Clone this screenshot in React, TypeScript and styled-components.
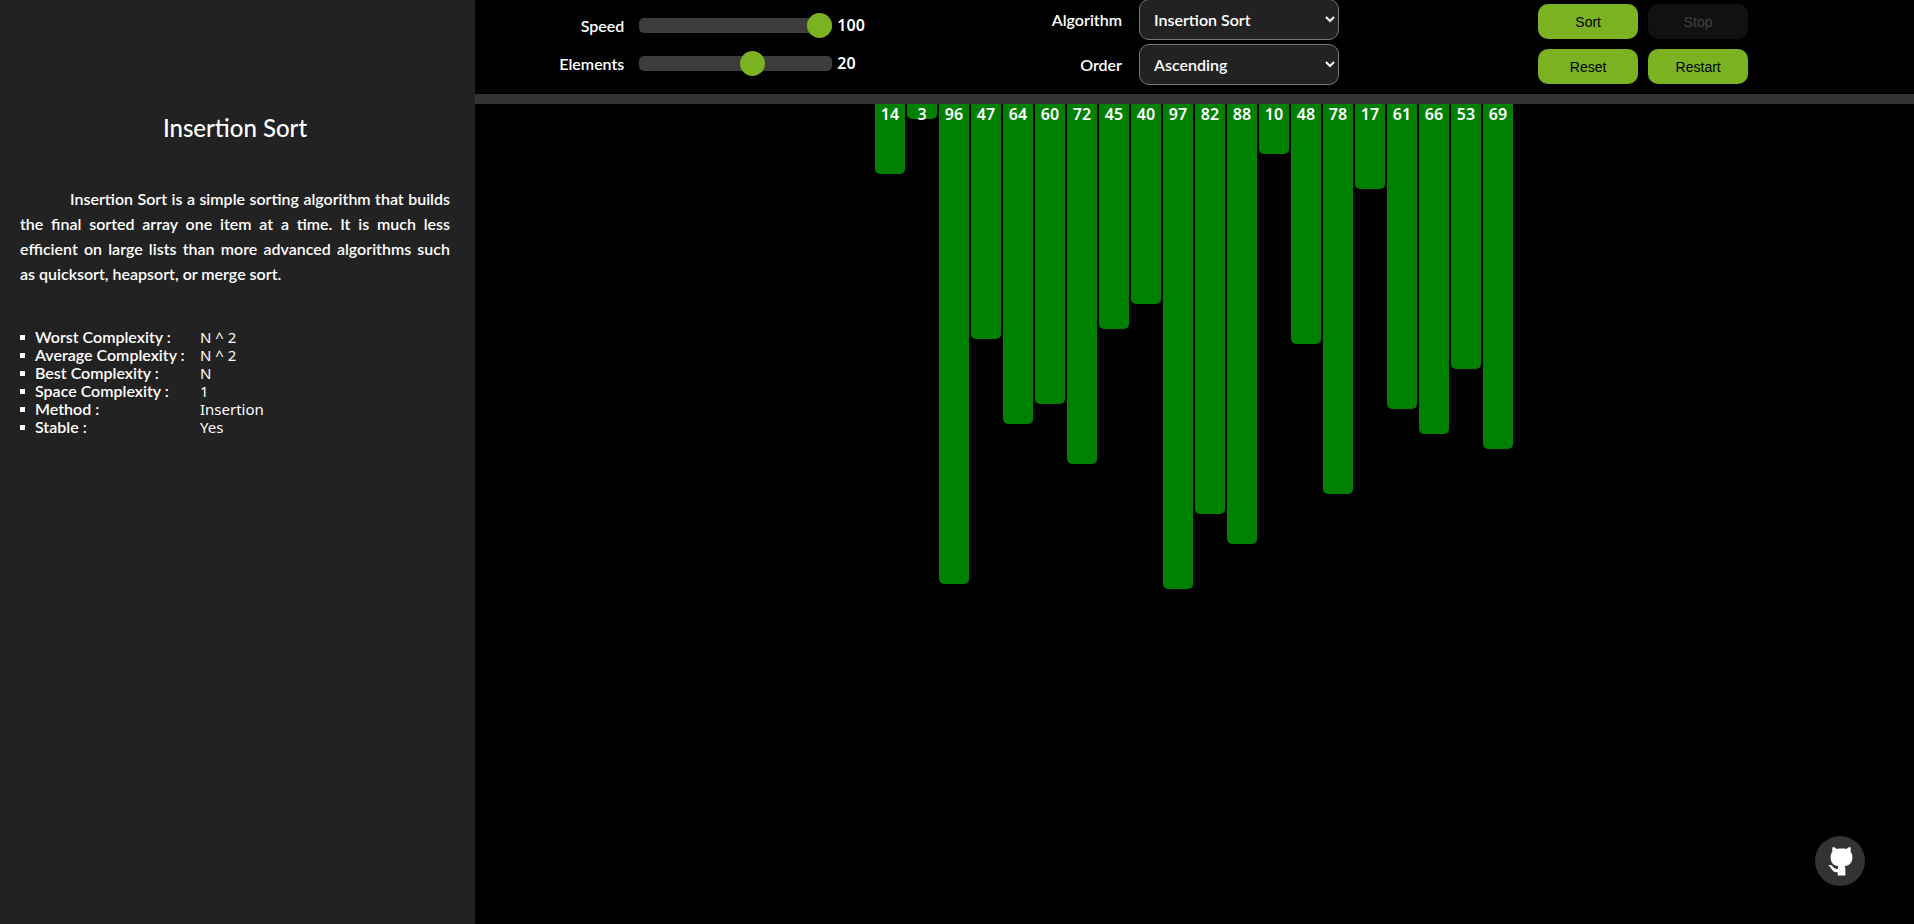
import { useState } from "react";
import styled, { createGlobalStyle } from "styled-components";

const GlobalStyle = createGlobalStyle`
  *, *::before, *::after { box-sizing: border-box; }
  body {
    margin: 0;
    background: #000;
    color: #fff;
    font-family: Lato, "Noto Sans", sans-serif;
    font-size: 16px;
  }
`;

const Page = styled.div`
  display: grid;
  grid-template-columns: minmax(300px, 475px) minmax(0, 1fr);
  min-height: 100vh;
`;

const Sidebar = styled.aside`
  background: #222;
  padding: 112px 25px 40px 20px;
`;

const Title = styled.h1`
  margin: 0 0 42px;
  font-size: 24px;
  line-height: 32px;
  font-weight: 500;
  text-align: center;
`;

const Description = styled.p`
  margin: 0 0 42px;
  font-size: 16px;
  line-height: 25px;
  font-weight: 600;
  text-align: justify;
  text-indent: 50px;
`;

const Facts = styled.ul`
  margin: 0;
  padding: 0;
  list-style: none;
`;

const Fact = styled.li`
  display: grid;
  grid-template-columns: 15px 165px 1fr;
  align-items: center;
  line-height: 18px;

  &::before {
    content: "";
    width: 5px;
    height: 5px;
    background: #fff;
  }
`;

const FactName = styled.span`
  font-weight: 600;
`;

const FactValue = styled.span`
  font-family: "Noto Sans", sans-serif;
  font-size: 15px;
`;

const Main = styled.main`
  min-width: 0;
`;

const Toolbar = styled.header`
  display: grid;
  grid-template-columns: repeat(3, 1fr);
  align-content: center;
  align-items: center;
  justify-items: center;
  height: 104px;
  padding-bottom: 10px;
  border-bottom: 10px solid #333;
`;

const Sliders = styled.div`
  display: grid;
  grid-template-columns: 68px 193px 30px;
  grid-auto-rows: 38px;
  align-items: center;
  column-gap: 15px;
  margin-left: 4px;
  padding-top: 4px;
`;

const Selects = styled.div`
  display: grid;
  grid-template-columns: 72px 200px;
  gap: 4px 17px;
  align-items: center;
`;

const Label = styled.label`
  font-weight: 600;
  text-align: right;
`;

const Range = styled.input`
  appearance: none;
  width: 100%;
  height: 15px;
  margin: 0;
  border-radius: 5px;
  background: #3c3c3c;

  &::-webkit-slider-thumb {
    appearance: none;
    width: 25px;
    height: 25px;
    border-radius: 50%;
    background: #7ab222;
  }
`;

const Reading = styled.output`
  margin-left: -10px;
  font-family: "Noto Sans", sans-serif;
  font-weight: 600;
`;

const Select = styled.select`
  width: 100%;
  height: 41px;
  padding: 0 10px;
  border: 1px solid #767676;
  border-radius: 10px;
  background: #222;
  color: #fff;
  font-family: inherit;
  font-size: 16px;
  font-weight: 600;
`;

const Actions = styled.div`
  display: grid;
  grid-template-columns: 100px 100px;
  gap: 10px;
  margin-right: 62px;
  padding-top: 4px;
`;

const Action = styled.button`
  height: 35px;
  padding: 0;
  border: 0;
  border-radius: 10px;
  background: #7ab222;
  color: #000;
  font-family: "Liberation Sans", Arial, sans-serif;
  font-size: 14px;

  &:disabled {
    background: #111;
    color: #444;
  }
`;

const Bars = styled.div`
  display: flex;
  justify-content: center;
  align-items: flex-start;
  gap: 2px;
  padding-right: 1px;
`;

const Bar = styled.div`
  width: 30px;
  border-radius: 0 0 5px 5px;
  background: green;
  font-family: "Noto Sans", sans-serif;
  font-weight: 600;
  line-height: 20px;
  text-align: center;
`;

const GithubLink = styled.a`
  position: fixed;
  right: 49px;
  bottom: 38px;
  width: 50px;
  height: 50px;
  border-radius: 50%;
  background: #333;
`;

const facts = [
  ["Worst Complexity :", "N ^ 2"],
  ["Average Complexity :", "N ^ 2"],
  ["Best Complexity :", "N"],
  ["Space Complexity :", "1"],
  ["Method :", "Insertion"],
  ["Stable :", "Yes"],
];

const values = [14, 3, 96, 47, 64, 60, 72, 45, 40, 97, 82, 88, 10, 48, 78, 17, 61, 66, 53, 69];

export default function App() {
  const [speed, setSpeed] = useState(100);
  const [elements, setElements] = useState(20);

  return (
    <>
      <GlobalStyle />
      <Page>
        <Sidebar>
          <Title>Insertion Sort</Title>
          <Description>
            Insertion Sort is a simple sorting algorithm that builds the final sorted array one
            item at a time. It is much less efficient on large lists than more advanced
            algorithms such as quicksort, heapsort, or merge sort.
          </Description>
          <Facts>
            {facts.map(([name, value]) => (
              <Fact key={name}>
                <FactName>{name}</FactName>
                <FactValue>{value}</FactValue>
              </Fact>
            ))}
          </Facts>
        </Sidebar>
        <Main>
          <Toolbar>
            <Sliders>
              <Label htmlFor="speed">Speed</Label>
              <Range
                id="speed"
                type="range"
                min={1}
                max={100}
                value={speed}
                onChange={(e) => setSpeed(Number(e.target.value))}
              />
              <Reading htmlFor="speed">{speed}</Reading>
              <Label htmlFor="elements">Elements</Label>
              <Range
                id="elements"
                type="range"
                min={5}
                max={30}
                value={elements}
                onChange={(e) => setElements(Number(e.target.value))}
              />
              <Reading htmlFor="elements">{elements}</Reading>
            </Sliders>
            <Selects>
              <Label htmlFor="algorithm">Algorithm</Label>
              <Select id="algorithm">
                <option>Insertion Sort</option>
              </Select>
              <Label htmlFor="order">Order</Label>
              <Select id="order">
                <option>Ascending</option>
                <option>Descending</option>
              </Select>
            </Selects>
            <Actions>
              <Action type="button">Sort</Action>
              <Action type="button" disabled>Stop</Action>
              <Action type="button">Reset</Action>
              <Action type="button">Restart</Action>
            </Actions>
          </Toolbar>
          <Bars>
            {values.map((value, index) => (
              <Bar key={index} style={{ height: value * 5 }}>{value}</Bar>
            ))}
          </Bars>
        </Main>
      </Page>
      <GithubLink href="#github" aria-label="GitHub">
        <svg width="50" height="50" viewBox="0 0 50 50" fill="#fff" aria-hidden="true">
          <path d="M17.7 11C19.3 11.1 20.6 11.8 21.6 12.9C25 12.4 28 12.4 31.4 12.9C32.4 11.8 33.7 11.1 35.3 11C35.9 12.6 35.9 14.2 35.5 15.6C36.8 17.2 37.4 19 37.4 21.3C37.4 27 34 30 29.6 30C30.1 30.8 30.4 32 30.4 33V39.5H22.7V36.3C17.8 36.5 17 33.2 15.6 31.4C14.9 30.6 14 30.2 13.2 29.6C14.6 28.6 16.6 29 17.8 30.6C19 32.6 20.4 33.3 22.7 33C22.7 32 23 31 23.4 30C19 30 15.6 27 15.6 21.3C15.6 19 16.2 17.2 17.5 15.6C17.1 14.2 17.1 12.6 17.7 11Z" />
        </svg>
      </GithubLink>
    </>
  );
}
